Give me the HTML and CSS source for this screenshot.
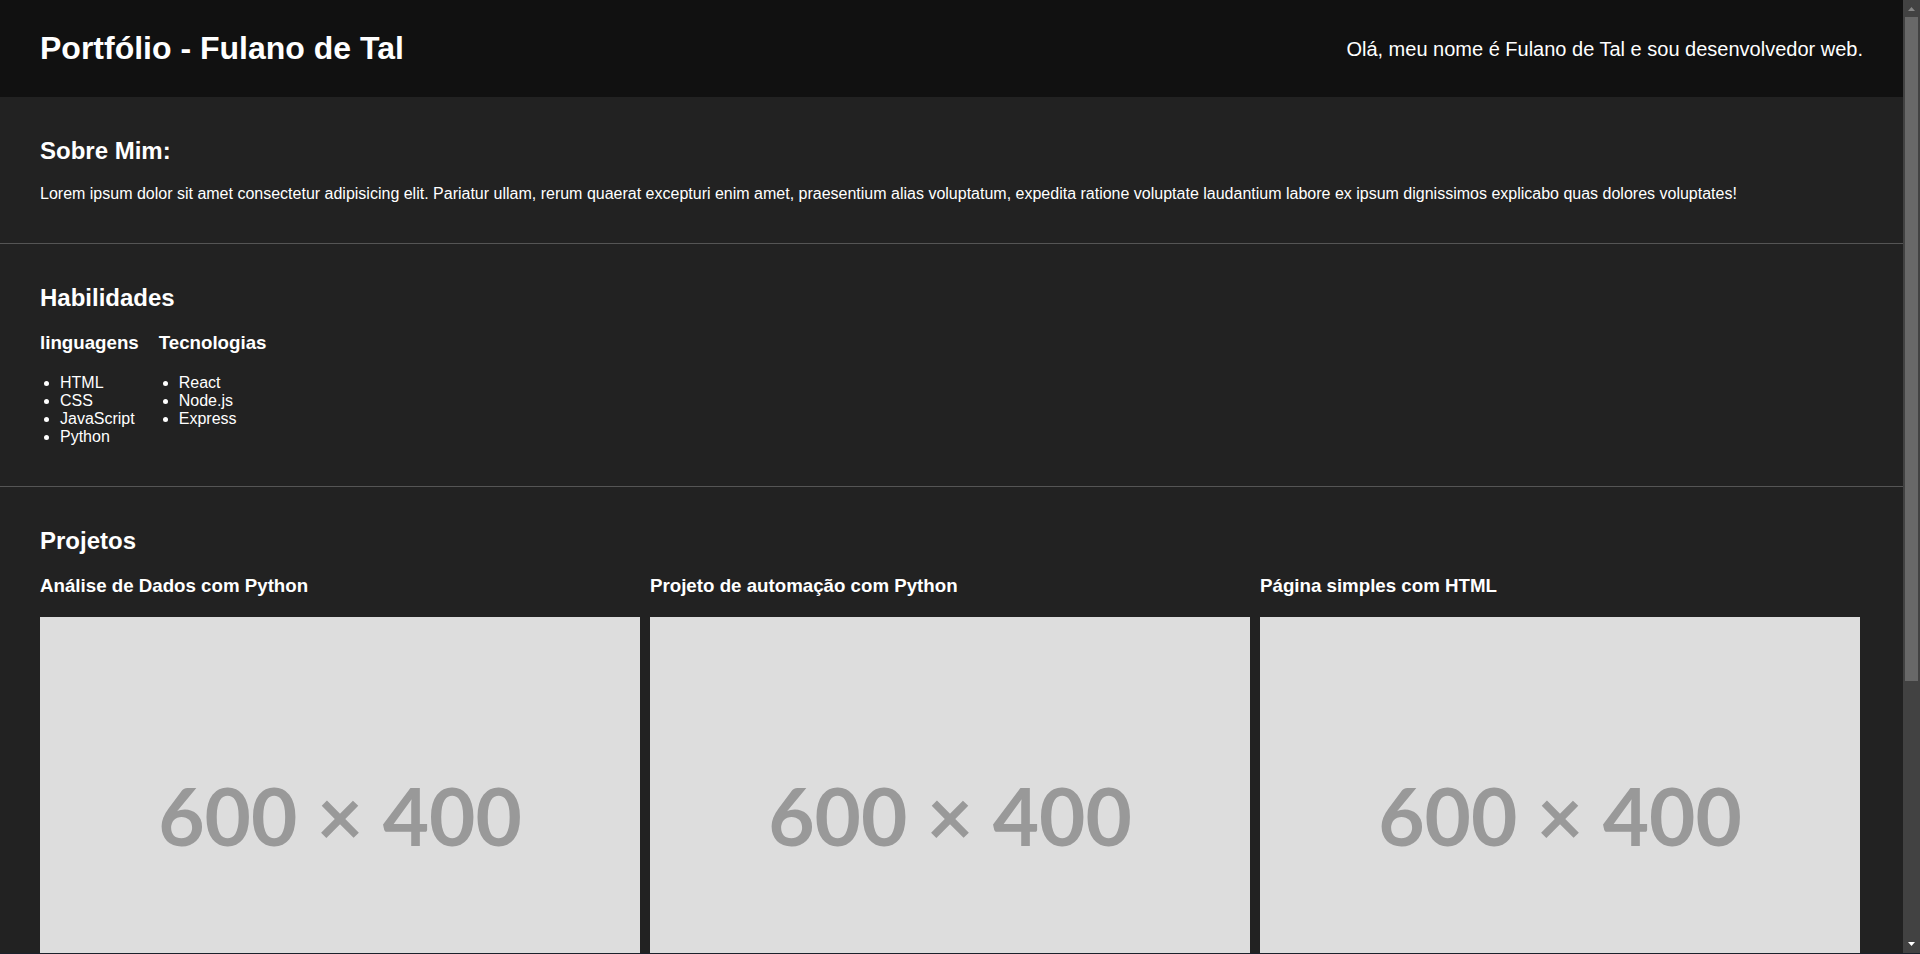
FILE: index.html
```html
<!DOCTYPE html>
<html lang="pt-BR">
<head>
<meta charset="utf-8">
<title>Portfólio - Fulano de Tal</title>
<link rel="stylesheet" href="styles.css">
</head>
<body>
<div class="window">
  <div class="page">
    <header class="header">
      <h1>Portfólio - Fulano de Tal</h1>
      <p>Olá, meu nome é Fulano de Tal e sou desenvolvedor web.</p>
    </header>
    <main>
      <section class="section">
        <h2>Sobre Mim:</h2>
        <p>Lorem ipsum dolor sit amet consectetur adipisicing elit. Pariatur ullam, rerum quaerat excepturi enim amet, praesentium alias voluptatum, expedita ratione voluptate laudantium labore ex ipsum dignissimos explicabo quas dolores voluptates!</p>
      </section>
      <section class="section">
        <h2>Habilidades</h2>
        <div class="skills">
          <div>
            <h3>linguagens</h3>
            <ul>
              <li>HTML</li>
              <li>CSS</li>
              <li>JavaScript</li>
              <li>Python</li>
            </ul>
          </div>
          <div>
            <h3>Tecnologias</h3>
            <ul>
              <li>React</li>
              <li>Node.js</li>
              <li>Express</li>
            </ul>
          </div>
        </div>
      </section>
      <section class="section">
        <h2>Projetos</h2>
        <div class="projects">
          <article>
            <h3>Análise de Dados com Python</h3>
            <div class="thumb">600 × 400</div>
          </article>
          <article>
            <h3>Projeto de automação com Python</h3>
            <div class="thumb">600 × 400</div>
          </article>
          <article>
            <h3>Página simples com HTML</h3>
            <div class="thumb">600 × 400</div>
          </article>
        </div>
      </section>
    </main>
  </div>
  <div class="scrollbar" aria-hidden="true">
    <svg class="arrow" viewBox="0 0 17 17"><path d="M5 11h7L8.500 7z" fill="#868686"/></svg>
    <div class="track"><div class="handle"></div></div>
    <svg class="arrow" viewBox="0 0 17 17"><path d="M5 6h7L8.500 10z" fill="#fff"/></svg>
  </div>
</div>
</body>
</html>
```
FILE: styles.css
```css
* {
  box-sizing: border-box;
  margin: 0;
  padding: 0;
}

body {
  background: #222;
  color: #fff;
  font-family: "Liberation Sans", Arial, sans-serif;
  font-size: 16px;
  line-height: 18px;
}

.window {
  display: grid;
  grid-template-columns: minmax(0, 1fr) 17px;
  height: 100vh;
  border-bottom: 1px solid #1b212b;
}

.page {
  overflow-y: auto;
  scrollbar-width: none;
}

.header {
  display: flex;
  justify-content: space-between;
  align-items: center;
  padding: 30px 40px;
  background: #111;
}

.header p {
  font-size: 20px;
  line-height: 24px;
}

h1 {
  font-size: 32px;
  line-height: 37px;
}

h2 {
  margin-bottom: 20px;
  font-size: 24px;
  line-height: 28px;
}

h3 {
  margin-bottom: 20px;
  line-height: 22px;
}

.section {
  padding: 40px;
}

.section + .section {
  border-top: 1px solid #555;
}

.skills {
  display: flex;
  gap: 20px;
}

.skills ul {
  padding-left: 20px;
}

.projects {
  display: grid;
  grid-template-columns: repeat(3, minmax(0, 600px));
  gap: 10px;
}

.thumb {
  display: flex;
  align-items: center;
  justify-content: center;
  aspect-ratio: 3 / 2;
  padding-bottom: 4px;
  background: #ddd;
  color: #999;
  font-family: Lato, sans-serif;
  font-size: 80px;
  font-weight: 700;
  line-height: 96px;
}

.scrollbar {
  display: flex;
  flex-direction: column;
  background: #424242;
}

.arrow {
  flex: none;
  width: 17px;
  height: 17px;
}

.track {
  display: grid;
  grid-template-rows: 13fr 5fr;
  flex: 1;
  padding: 0 2px;
}

.handle {
  background: #686868;
}
```
